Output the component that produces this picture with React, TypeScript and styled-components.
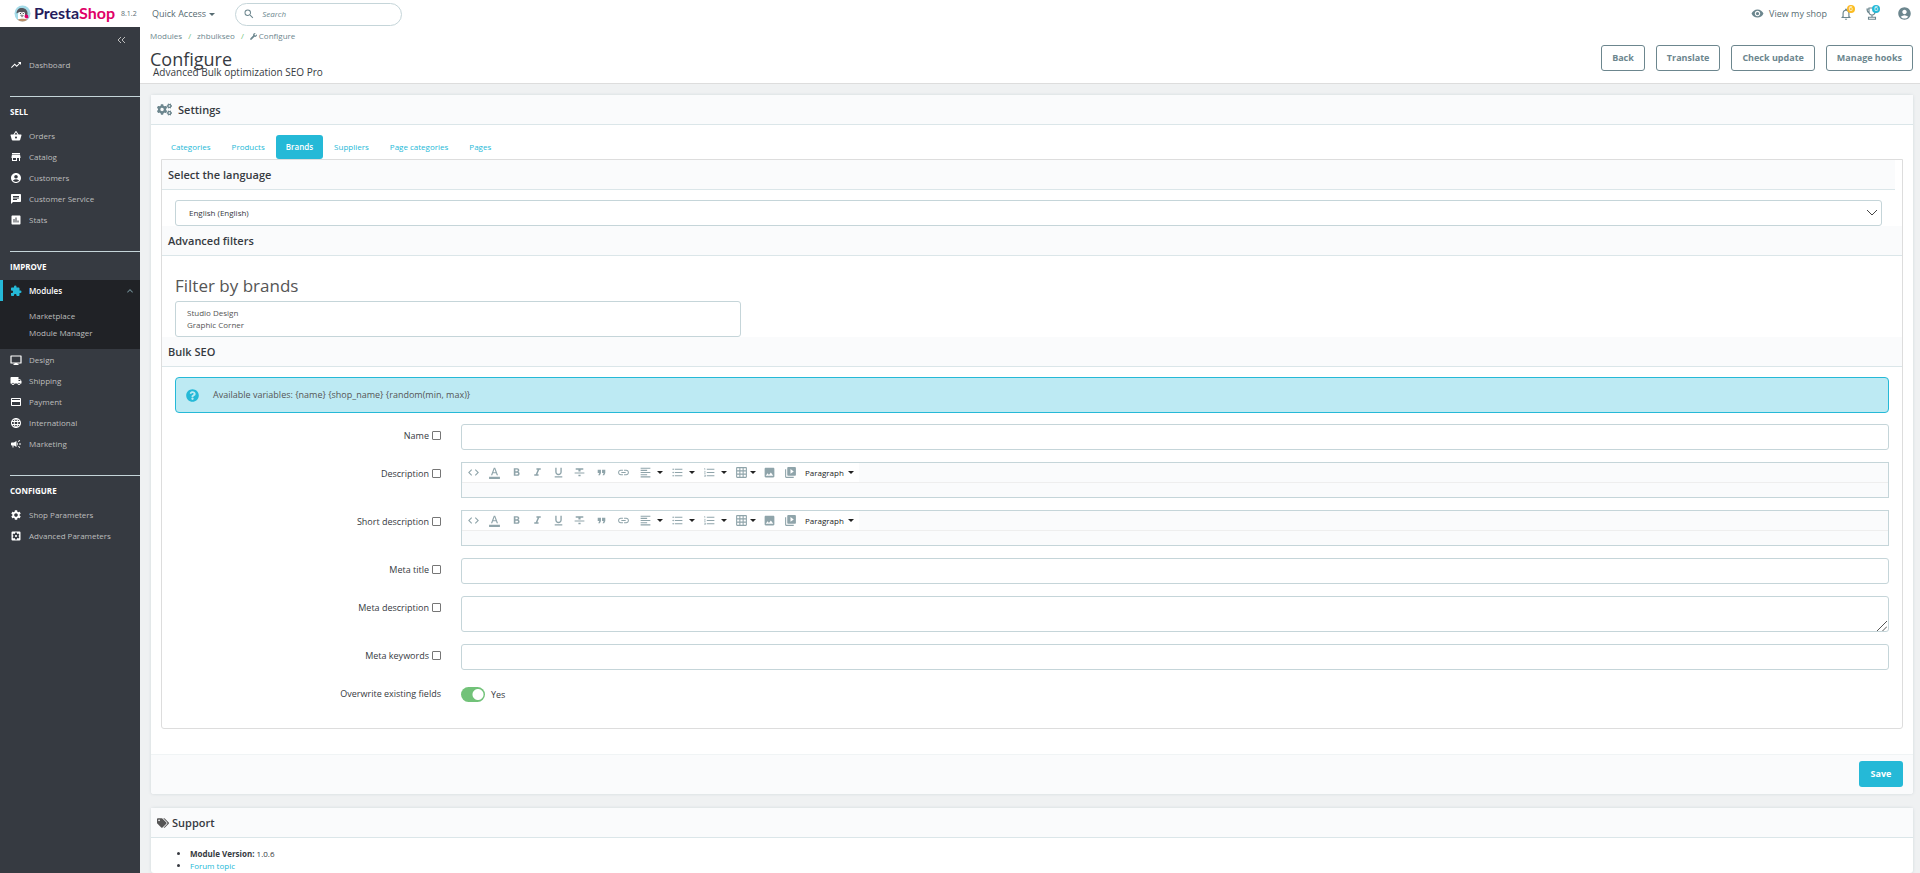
import React, { ReactNode } from "react";
import styled, { createGlobalStyle, css } from "styled-components";
import {
  MdTrendingUp, MdShoppingBasket, MdStore, MdAccountCircle, MdChat, MdAssessment, MdExtension,
  MdLocalShipping, MdPayment, MdLanguage, MdCampaign, MdSettings, MdSettingsApplications,
  MdVisibility, MdNotificationsNone, MdSearch, MdCode, MdFormatColorText, MdFormatBold, MdFormatItalic,
  MdFormatUnderlined, MdFormatStrikethrough, MdFormatQuote, MdLink, MdFormatAlignLeft,
  MdFormatListBulleted, MdFormatListNumbered, MdGridOn, MdPhoto, MdVideoLibrary, MdKeyboardArrowUp,
} from "react-icons/md";
import { FaCogs, FaTags, FaWrench, FaQuestionCircle } from "react-icons/fa";

const c = {
  text: "#363a41",
  soft: "#576c72",
  slate: "#6c868e",
  accent: "#25b9d7",
  line: "#c5d5d9",
  pale: "#fafbfc",
  heading: "#dbe6e9",
  frame: "#dddddd",
  side: "#363a41",
};

const GlobalStyle = createGlobalStyle`
  *, *::before, *::after { box-sizing: border-box; }
  body { margin: 0; background: #eff1f2; color: ${c.text}; font: 9px/12px "Open Sans", "Liberation Sans", sans-serif; }
  button, input, select, textarea { font: inherit; color: inherit; margin: 0; }
  h1, h2, h3, p, ul { margin: 0; padding: 0; font-weight: 400; }
  a { color: inherit; text-decoration: none; }
  svg { flex: none; display: block; }
`;

const Page = styled.div`
  display: flex;
  flex-direction: column;
  min-height: 100vh;
`;

const TopBar = styled.header`
  display: flex;
  align-items: center;
  height: 28px;
  padding-right: 8px;
  background: #fff;
`;

const Brand = styled.a`
  display: flex;
  align-items: center;
  width: 140px;
  height: 28px;
  padding: 0 0 2px 14px;
  gap: 3px;
`;

const BrandName = styled.span`
  font: 700 16px/20px "Lato", sans-serif;
  color: #251b5b;
  em { font-style: normal; color: #df0067; }
`;

const Version = styled.span`
  margin: 2px 0 0 3px;
  font-size: 7px;
  color: ${c.soft};
`;

const QuickAccess = styled.button`
  display: flex;
  align-items: center;
  gap: 3px;
  margin-left: 12px;
  padding: 0;
  border: 0;
  background: none;
  color: ${c.soft};
`;

const Caret = styled.span`
  border: 3px solid transparent;
  border-top-color: currentColor;
  border-bottom: 0;
`;

const SearchBox = styled.label`
  display: flex;
  align-items: center;
  gap: 7px;
  width: 167px;
  height: 23px;
  margin: 0 auto 0 20px;
  padding: 0 7px;
  border: 1px solid ${c.line};
  border-radius: 12px;
  color: ${c.slate};
  input {
    flex: 1;
    min-width: 0;
    padding: 0;
    border: 0;
    outline: 0;
    background: none;
    font-size: 8px;
    font-style: italic;
  }
  input::placeholder { color: ${c.slate}; opacity: 1; }
`;

const TopLinks = styled.nav`
  display: flex;
  align-items: center;
  padding-bottom: 1px;
  color: ${c.slate};
`;

const ShopLink = styled.a`
  display: flex;
  align-items: center;
  gap: 5px;
  margin-right: 12px;
  color: ${c.soft};
  svg { color: ${c.slate}; }
`;

const IconButton = styled.button<{ $gap?: number }>`
  position: relative;
  margin-right: ${(p) => p.$gap ?? 0}px;
  padding: 0;
  border: 0;
  background: none;
`;

const Badge = styled.span<{ $color: string }>`
  position: absolute;
  top: -2px;
  right: -2px;
  width: 8px;
  height: 8px;
  border-radius: 50%;
  background: ${(p) => p.$color};
  color: #fff;
  font-size: 7px;
  line-height: 8px;
  text-align: center;
`;

const Columns = styled.div`
  display: flex;
  flex: 1;
`;

const Sidebar = styled.nav`
  flex: none;
  width: 140px;
  margin-top: -1px;
  background: ${c.side};
  color: #bebebe;
  font-size: 8px;
`;

const Collapse = styled.button`
  display: block;
  margin: 7px 15px 8px auto;
  padding: 0;
  border: 0;
  background: none;
  color: #bebebe;
`;

const MenuGroup = styled.section`
  margin: 21px 0 0 10px;
  border-top: 1px solid ${c.line};
`;

const MenuTitle = styled.h2`
  margin: 9px 0 7px;
  font-size: 8px;
  font-weight: 700;
  color: #fff;
`;

const MenuLink = styled.a<{ $active?: boolean; $top?: boolean }>`
  display: flex;
  align-items: center;
  gap: 7px;
  height: 21px;
  padding-left: ${(p) => (p.$top ? 10 : 0)}px;
  svg { color: #fff; }
  ${(p) => p.$active && css`
    margin-left: -10px;
    padding: 0 4px 0 7px;
    border-left: 3px solid ${c.accent};
    background: #202226;
    color: #fff;
    font-weight: 600;
    svg:first-child { color: ${c.accent}; }
    svg:last-child { margin-left: auto; color: ${c.slate}; }
  `}
`;

const SubMenu = styled.div`
  display: flex;
  flex-direction: column;
  gap: 1px;
  margin-left: -10px;
  padding: 7px 0 8px 29px;
  background: #202226;
  a { line-height: 16px; }
`;

const Main = styled.main`
  display: flex;
  flex: 1;
  flex-direction: column;
  min-width: 0;
`;

const PageHead = styled.div`
  display: flex;
  justify-content: space-between;
  height: 56px;
  padding: 0 7px 0 10px;
  border-bottom: 1px solid ${c.frame};
  background: #fff;
`;

const Crumbs = styled.nav`
  display: flex;
  align-items: center;
  gap: 6px;
  height: 16px;
  font-size: 8px;
  color: ${c.slate};
  i { color: #72c279; font-style: normal; }
  a, span { display: flex; align-items: center; gap: 2px; }
`;

const PageTitle = styled.h1`
  margin-top: 5px;
  font-size: 18px;
  line-height: 20px;
`;

const SubTitle = styled.p`
  margin-top: -3px;
  padding-left: 3px;
  font-size: 10px;
`;

const Actions = styled.div`
  display: flex;
  gap: 11px;
  padding-top: 17px;
`;

const OutlineButton = styled.button`
  height: 26px;
  padding: 0 10px;
  border: 1px solid ${c.slate};
  border-radius: 3px;
  background: #fff;
  color: ${c.slate};
  font-weight: 700;
`;

const Panel = styled.section<{ $fill?: boolean }>`
  flex: ${(p) => (p.$fill ? "1" : "none")};
  margin: ${(p) => (p.$fill ? "14px 7px 0 11px" : "11px 7px 0 11px")};
  border-radius: 3px;
  background: #fff;
  box-shadow: 0 0 3px rgba(108, 134, 142, 0.25);
`;

const PanelHeading = styled.h2<{ $gap?: number }>`
  display: flex;
  align-items: center;
  gap: ${(p) => p.$gap ?? 6}px;
  height: 30px;
  padding-left: 6px;
  border-bottom: 1px solid ${c.heading};
  background: ${c.pale};
  font-size: 11px;
  font-weight: 600;
`;

const PanelBody = styled.div`
  padding: 10px 10px 25px;
`;

const Tabs = styled.div`
  display: flex;
`;

const Tab = styled.button<{ $active?: boolean }>`
  height: 24px;
  margin-right: 1px;
  padding: 0 10px;
  border: 0;
  border-radius: 3px;
  background: ${(p) => (p.$active ? c.accent : "none")};
  color: ${(p) => (p.$active ? "#fff" : c.accent)};
  font-size: 8px;
  font-weight: ${(p) => (p.$active ? 600 : 400)};
`;

const TabContent = styled.div`
  padding-bottom: 14px;
  border: 1px solid ${c.frame};
  border-radius: 0 0 3px 3px;
`;

const SectionHeading = styled.h3<{ $inset?: boolean }>`
  height: 30px;
  margin-right: ${(p) => (p.$inset ? 7 : 0)}px;
  padding-left: 6px;
  border-bottom: 1px solid ${c.heading};
  background: ${c.pale};
  font-size: 11px;
  font-weight: 600;
  line-height: 29px;
`;

const SectionBody = styled.div<{ $right?: number; $top?: number }>`
  padding: ${(p) => p.$top ?? 10}px ${(p) => p.$right ?? 13}px 0 13px;
`;

const control = css`
  display: block;
  width: 100%;
  border: 1px solid ${c.line};
  border-radius: 3px;
  outline: 0;
  background-color: #fff;
`;

const SelectWrap = styled.div`
  display: grid;
  align-items: center;
  select, svg { grid-area: 1 / 1; }
  svg { justify-self: end; margin-right: 4px; pointer-events: none; }
`;

const Select = styled.select`
  ${control}
  height: 26px;
  padding: 0 13px;
  appearance: none;
  font-size: 8px;
`;

const FilterTitle = styled.h3`
  font-size: 17px;
  line-height: 24px;
  color: #555;
`;

const MultiSelect = styled.select`
  ${control}
  width: 33%;
  height: 36px;
  margin-top: 3px;
  padding: 5px 11px;
  overflow: hidden;
  color: #555;
  font-size: 8px;
  option { min-height: 12px; padding: 0; line-height: 12px; }
`;

const Alert = styled.p`
  display: flex;
  align-items: center;
  gap: 14px;
  height: 36px;
  margin-bottom: 11px;
  padding-left: 10px;
  border: 1px solid ${c.accent};
  border-radius: 4px;
  background: #bdeaf3;
  color: #555;
  svg { color: ${c.accent}; }
`;

const FormRow = styled.div`
  display: grid;
  grid-template-columns: 266px 1fr;
  column-gap: 20px;
  align-items: start;
  margin-bottom: 12px;
`;

const RowLabel = styled.div`
  display: flex;
  align-items: center;
  justify-content: flex-end;
  gap: 3px;
  padding-top: 6px;
`;

const Tick = styled.input`
  width: 9px;
  height: 9px;
  margin-bottom: 1px;
  appearance: none;
  border: 1px solid #767676;
  border-radius: 1px;
  background: #fff;
`;

const TextInput = styled.input`
  ${control}
  height: 26px;
`;

const AreaWrap = styled.div`
  display: grid;
  textarea, svg { grid-area: 1 / 1; }
  svg { place-self: end; margin: 0 2px 1px 0; pointer-events: none; }
`;

const TextArea = styled.textarea`
  ${control}
  height: 36px;
  resize: none;
`;

const Editor = styled.div`
  height: 36px;
  border: 1px solid ${c.line};
  background: ${c.pale};
`;

const Toolbar = styled.div`
  display: flex;
  align-items: center;
  height: 20px;
  padding-left: 1px;
  border-bottom: 1px solid #eee;
`;

const ToolGroup = styled.div`
  display: flex;
  align-items: center;
  height: 19px;
  padding-right: 1px;
  background: #fff;
`;

const Tool = styled.button<{ $width?: number; $gap?: number }>`
  display: flex;
  align-items: center;
  gap: ${(p) => p.$gap ?? 5}px;
  width: ${(p) => p.$width ?? 21}px;
  height: 19px;
  padding: 0 0 0 4px;
  border: 0;
  background: none;
  color: #8fa4aa;
  ${Caret} { color: #222; }
`;

const FormatTool = styled.button`
  display: flex;
  align-items: center;
  gap: 4px;
  height: 19px;
  padding: 0 5px 0 3px;
  border: 0;
  background: #fff;
  color: #222;
  font-size: 8px;
`;

const SwitchRow = styled.label`
  display: flex;
  align-items: center;
  gap: 6px;
  padding-top: 5px;
`;

const Switch = styled.input`
  width: 24px;
  height: 15px;
  appearance: none;
  border-radius: 8px;
  background: radial-gradient(circle at 17px 50%, #fff 5px, transparent 6px) #72c279;
`;

const PanelFooter = styled.div`
  display: flex;
  justify-content: flex-end;
  padding: 6px 10px 7px;
  border-top: 1px solid #f0f4f5;
  border-radius: 0 0 3px 3px;
  background: ${c.pale};
`;

const SaveButton = styled.button`
  width: 44px;
  height: 26px;
  padding: 0;
  border: 0;
  border-radius: 3px;
  background: ${c.accent};
  color: #fff;
  font-weight: 700;
`;

const SupportList = styled.ul`
  padding: 10px 0 0 39px;
  font-size: 8px;
  a { color: ${c.accent}; }
  b { font-weight: 700; }
`;

function Logo() {
  return (
    <svg width="17" height="17" viewBox="0 0 34 34" aria-hidden="true">
      <circle cx="17" cy="17" r="16" fill="#a4dbe8" />
      <path d="M8 29V19l3-5 12 0 3 7v8c-4 4-13 4-18 0z" fill="#fff" />
      <path d="M5 17C5 9 11 5 17 6c7 1 11 6 10 13l-3 4-4-8H9z" fill="#56565c" />
      <ellipse cx="12" cy="17" rx="3.5" ry="3" fill="#fff" />
      <ellipse cx="19" cy="17" rx="3" ry="3" fill="#fff" />
      <circle cx="13" cy="17" r="1.2" fill="#222" />
      <circle cx="18.500" cy="17" r="1.200" fill="#222" />
      <path d="M12 20l4-1 4 2-4 4z" fill="#8b8b90" />
      <path d="M22 19l6 1 1 6-5 1-3-3z" fill="#df0067" />
      <path d="M7 29c5-2 15-2 20 0-4 5-16 5-20 0z" fill="#b98d68" />
    </svg>
  );
}

function Monitor() {
  return (
    <svg width="12" height="12" viewBox="0 0 24 24" aria-hidden="true">
      <path d="M2 4h20v14H2z" fill="none" stroke="currentColor" strokeWidth="2.4" strokeLinejoin="round" />
      <path d="M9 18h6v2h2v2H7v-2h2z" fill="currentColor" />
    </svg>
  );
}

function Trophy() {
  return (
    <svg width="12" height="13" viewBox="0 0 24 26" fill="none" stroke="currentColor" strokeWidth="2.2" aria-hidden="true">
      <path d="M6 2h12v7c0 4-2 7-6 7s-6-3-6-7zM6 4H2c0 5 2 7 5 8M18 4h4c0 5-2 7-5 8M12 16v4M5 24.500v-4h14v4z" />
    </svg>
  );
}

type Item = [string, ReactNode];

const sell: Item[] = [
  ["Orders", <MdShoppingBasket size={12} />],
  ["Catalog", <MdStore size={12} />],
  ["Customers", <MdAccountCircle size={12} />],
  ["Customer Service", <MdChat size={12} />],
  ["Stats", <MdAssessment size={12} />],
];
const improve: Item[] = [
  ["Design", <Monitor />],
  ["Shipping", <MdLocalShipping size={12} />],
  ["Payment", <MdPayment size={12} />],
  ["International", <MdLanguage size={12} />],
  ["Marketing", <MdCampaign size={12} />],
];
const configure: Item[] = [
  ["Shop Parameters", <MdSettings size={12} />],
  ["Advanced Parameters", <MdSettingsApplications size={12} />],
];

const MenuItems = ({ items }: { items: Item[] }) => (
  <>
    {items.map(([label, icon]) => (
      <MenuLink href="#" key={label}>{icon}{label}</MenuLink>
    ))}
  </>
);

function RichEditor({ label }: { label: string }) {
  return (
    <Editor role="group" aria-label={label}>
      <Toolbar>
        <ToolGroup>
          <Tool aria-label="Source code"><MdCode size={13} /></Tool>
          <Tool aria-label="Text color"><MdFormatColorText size={13} /></Tool>
        </ToolGroup>
        <ToolGroup>
          <Tool aria-label="Bold"><MdFormatBold size={13} /></Tool>
          <Tool aria-label="Italic"><MdFormatItalic size={13} /></Tool>
          <Tool aria-label="Underline"><MdFormatUnderlined size={13} /></Tool>
          <Tool aria-label="Strikethrough"><MdFormatStrikethrough size={13} /></Tool>
        </ToolGroup>
        <ToolGroup><Tool aria-label="Blockquote"><MdFormatQuote size={13} /></Tool></ToolGroup>
        <ToolGroup><Tool aria-label="Link"><MdLink size={13} /></Tool></ToolGroup>
        <ToolGroup>
          <Tool $width={32} aria-label="Align"><MdFormatAlignLeft size={13} /><Caret /></Tool>
          <Tool $width={32} aria-label="Bullet list"><MdFormatListBulleted size={13} /><Caret /></Tool>
          <Tool $width={32} aria-label="Numbered list"><MdFormatListNumbered size={13} /><Caret /></Tool>
          <Tool $width={28} $gap={2} aria-label="Table"><MdGridOn size={13} /><Caret /></Tool>
          <Tool aria-label="Image"><MdPhoto size={13} /></Tool>
          <Tool aria-label="Video"><MdVideoLibrary size={13} /></Tool>
        </ToolGroup>
        <FormatTool>Paragraph<Caret /></FormatTool>
      </Toolbar>
    </Editor>
  );
}

function Field({ id, label, children }: { id: string; label: string; children: ReactNode }) {
  return (
    <FormRow>
      <RowLabel>
        <label htmlFor={id}>{label}</label>
        <Tick type="checkbox" id={id} />
      </RowLabel>
      {children}
    </FormRow>
  );
}

const tabs = ["Categories", "Products", "Brands", "Suppliers", "Page categories", "Pages"];

export default function App() {
  return (
    <Page>
      <GlobalStyle />
      <TopBar>
        <Brand href="#">
          <Logo />
          <BrandName>Presta<em>Shop</em></BrandName>
          <Version>8.1.2</Version>
        </Brand>
        <QuickAccess>Quick Access<Caret /></QuickAccess>
        <SearchBox>
          <MdSearch size={12} />
          <input type="text" placeholder="Search" aria-label="Search" />
        </SearchBox>
        <TopLinks>
          <ShopLink href="#"><MdVisibility size={13} />View my shop</ShopLink>
          <IconButton $gap={13} aria-label="Notifications">
            <MdNotificationsNone size={14} /><Badge $color="#fbbb22">6</Badge>
          </IconButton>
          <IconButton $gap={19} aria-label="Achievements">
            <Trophy /><Badge $color={c.accent}>6</Badge>
          </IconButton>
          <IconButton aria-label="Account"><MdAccountCircle size={15} /></IconButton>
        </TopLinks>
      </TopBar>
      <Columns>
        <Sidebar>
          <Collapse aria-label="Collapse menu">
            <svg width="8" height="12" viewBox="0 0 8 12" fill="none" stroke="currentColor"><path d="M4 3L1 6l3 3M8 3L5 6l3 3" /></svg>
          </Collapse>
          <MenuLink href="#" $top><MdTrendingUp size={12} />Dashboard</MenuLink>
          <MenuGroup>
            <MenuTitle>SELL</MenuTitle>
            <MenuItems items={sell} />
          </MenuGroup>
          <MenuGroup>
            <MenuTitle>IMPROVE</MenuTitle>
            <MenuLink href="#" $active><MdExtension size={12} />Modules<MdKeyboardArrowUp size={12} /></MenuLink>
            <SubMenu>
              <a href="#">Marketplace</a>
              <a href="#">Module Manager</a>
            </SubMenu>
            <MenuItems items={improve} />
          </MenuGroup>
          <MenuGroup>
            <MenuTitle>CONFIGURE</MenuTitle>
            <MenuItems items={configure} />
          </MenuGroup>
        </Sidebar>
        <Main>
          <PageHead>
            <div>
              <Crumbs>
                <a href="#">Modules</a><i>/</i><a href="#">zhbulkseo</a><i>/</i>
                <span><FaWrench size={7} />Configure</span>
              </Crumbs>
              <PageTitle>Configure</PageTitle>
              <SubTitle>Advanced Bulk optimization SEO Pro</SubTitle>
            </div>
            <Actions>
              {["Back", "Translate", "Check update", "Manage hooks"].map((t) => (
                <OutlineButton key={t}>{t}</OutlineButton>
              ))}
            </Actions>
          </PageHead>
          <Panel>
            <PanelHeading><FaCogs size={15} color={c.slate} />Settings</PanelHeading>
            <PanelBody>
              <Tabs>
                {tabs.map((t) => <Tab key={t} $active={t === "Brands"}>{t}</Tab>)}
              </Tabs>
              <TabContent>
                <SectionHeading $inset>Select the language</SectionHeading>
                <SectionBody $right={20}>
                  <SelectWrap>
                    <Select aria-label="Language" defaultValue="en"><option value="en">English (English)</option></Select>
                    <svg width="12" height="8" viewBox="0 0 12 8" fill="none" stroke="#444"><path d="M1 1l5 5 5-5" /></svg>
                  </SelectWrap>
                </SectionBody>
                <SectionHeading>Advanced filters</SectionHeading>
                <SectionBody $top={18}>
                  <FilterTitle id="brands">Filter by brands</FilterTitle>
                  <MultiSelect multiple size={2} aria-labelledby="brands">
                    <option>Studio Design</option>
                    <option>Graphic Corner</option>
                  </MultiSelect>
                </SectionBody>
                <SectionHeading>Bulk SEO</SectionHeading>
                <SectionBody>
                  <Alert><FaQuestionCircle size={13} />{"Available variables: {name} {shop_name} {random(min, max)}"}</Alert>
                  <Field id="name" label="Name"><TextInput aria-label="Name" /></Field>
                  <Field id="desc" label="Description"><RichEditor label="Description" /></Field>
                  <Field id="short" label="Short description"><RichEditor label="Short description" /></Field>
                  <Field id="mtitle" label="Meta title"><TextInput aria-label="Meta title" /></Field>
                  <Field id="mdesc" label="Meta description">
                    <AreaWrap>
                      <TextArea aria-label="Meta description" />
                      <svg width="10" height="10" viewBox="0 0 10 10" fill="none" stroke="#555"><path d="M0 10L10 0M5.500 10L10 5.500" /></svg>
                    </AreaWrap>
                  </Field>
                  <Field id="mkeys" label="Meta keywords"><TextInput aria-label="Meta keywords" /></Field>
                  <FormRow>
                    <RowLabel as="label" htmlFor="overwrite">Overwrite existing fields</RowLabel>
                    <SwitchRow><Switch type="checkbox" role="switch" id="overwrite" defaultChecked />Yes</SwitchRow>
                  </FormRow>
                </SectionBody>
              </TabContent>
            </PanelBody>
            <PanelFooter><SaveButton>Save</SaveButton></PanelFooter>
          </Panel>
          <Panel $fill>
            <PanelHeading $gap={3}><FaTags size={12} color="#555" />Support</PanelHeading>
            <SupportList>
              <li><b>Module Version:</b> 1.0.6</li>
              <li><a href="#">Forum topic</a></li>
            </SupportList>
          </Panel>
        </Main>
      </Columns>
    </Page>
  );
}
